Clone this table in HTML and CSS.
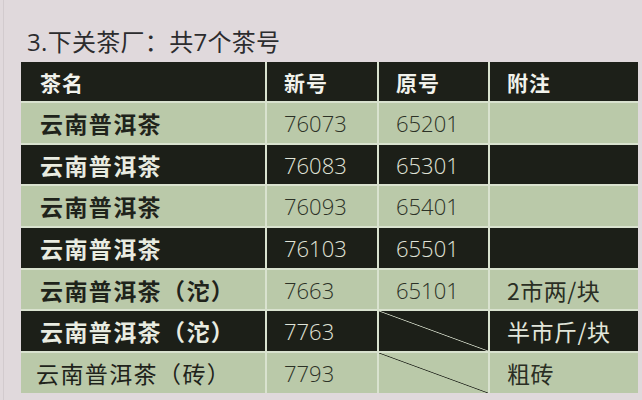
FILE: index.html
```html
<!DOCTYPE html>
<html lang="zh-CN">
<head>
<meta charset="utf-8">
<title>下关茶厂</title>
<link rel="stylesheet" href="styles.css">
</head>
<body>
<div class="page">
  <h1 class="title">3.下关茶厂：共7个茶号</h1>
  <div class="table">
    <div class="row head">
      <div class="cell name">茶名</div>
      <div class="cell">新号</div>
      <div class="cell">原号</div>
      <div class="cell">附注</div>
    </div>
    <div class="row light">
      <div class="cell name">云南普洱茶</div>
      <div class="cell num">76073</div>
      <div class="cell num">65201</div>
      <div class="cell note"></div>
    </div>
    <div class="row dark">
      <div class="cell name">云南普洱茶</div>
      <div class="cell num">76083</div>
      <div class="cell num">65301</div>
      <div class="cell note"></div>
    </div>
    <div class="row light">
      <div class="cell name">云南普洱茶</div>
      <div class="cell num">76093</div>
      <div class="cell num">65401</div>
      <div class="cell note"></div>
    </div>
    <div class="row dark">
      <div class="cell name">云南普洱茶</div>
      <div class="cell num">76103</div>
      <div class="cell num">65501</div>
      <div class="cell note"></div>
    </div>
    <div class="row light">
      <div class="cell name">云南普洱茶（沱）</div>
      <div class="cell num">7663</div>
      <div class="cell num">65101</div>
      <div class="cell note">2市两/块</div>
    </div>
    <div class="row dark">
      <div class="cell name">云南普洱茶（沱）</div>
      <div class="cell num">7763</div>
      <div class="cell num slash"></div>
      <div class="cell note">半市斤/块</div>
    </div>
    <div class="row light">
      <div class="cell name thin">云南普洱茶（砖）</div>
      <div class="cell num">7793</div>
      <div class="cell num slash"></div>
      <div class="cell note">粗砖</div>
    </div>
  </div>
</div>
</body>
</html>
```

FILE: styles.css
```css
html, body {
  margin: 0;
  padding: 0;
}

body {
  background: #e0d9dc;
  width: 642px;
  height: 400px;
  overflow: hidden;
  font-family: "Noto Sans CJK SC", "Noto Sans", sans-serif;
}

.page {
  height: 400px;
  box-sizing: border-box;
  border-left: 1px solid #d2cbce;
  margin-left: 3px;
  padding-top: 26px;
}

.title {
  margin: 0 0 0 23px;
  height: 31px;
  line-height: 31px;
  font-size: 24px;
  font-weight: 400;
  color: #2c2c2e;
  letter-spacing: 0.3px;
  font-family: "Open Sans", "Noto Sans CJK SC", sans-serif;
}

.table {
  margin-top: 5px;
  margin-left: 17px;
  width: 617px;
  display: grid;
  grid-template-columns: 244px 110px 109px 148px;
  grid-template-rows: 39px repeat(7, 39.7px);
  gap: 2px;
  background: #d9e2cf;
}

.row {
  display: contents;
}

.cell {
  display: flex;
  align-items: center;
  padding-left: 17px;
  font-size: 22px;
}

.cell.name {
  padding-left: 19px;
  font-weight: 700;
  font-size: 23px;
  letter-spacing: 1.4px;
}

.cell.name.thin {
  font-weight: 400;
  padding-left: 15px;
}

.head .cell {
  background: #1d2019;
  color: #f1f2ec;
  font-weight: 700;
  font-size: 21px;
  letter-spacing: 1px;
}

.light .cell {
  background: #bac9a9;
  color: #1f231b;
}

.dark .cell {
  background: #1c1f18;
  color: #e9ece1;
}

.cell.num {
  font-family: "Open Sans", "Noto Sans", sans-serif;
  font-weight: 300;
  font-size: 22px;
  letter-spacing: 0;
}

.light .cell.num {
  color: #2c3126;
}

.dark .cell.num {
  color: #e0e4d8;
}

.cell.note {
  font-weight: 400;
  font-size: 23px;
  letter-spacing: 0.5px;
}

.light .cell.note {
  color: #2a2e24;
}

.dark .cell.note {
  color: #e2e6da;
}

.dark .cell.slash {
  background: linear-gradient(to top right, #1c1f18 calc(50% - 0.8px), #c9d0bf 50%, #1c1f18 calc(50% + 0.8px));
}

.light .cell.slash {
  background: linear-gradient(to top right, #bac9a9 calc(50% - 0.8px), #2a2e25 50%, #bac9a9 calc(50% + 0.8px));
}
```
